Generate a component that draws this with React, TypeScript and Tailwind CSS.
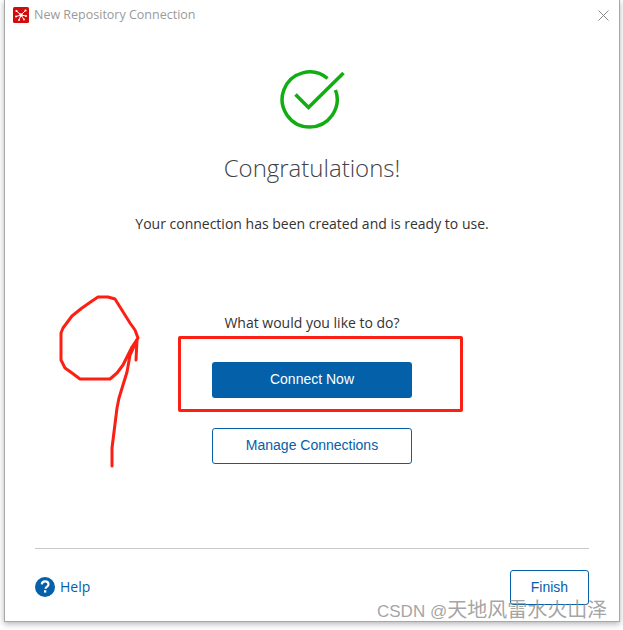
export default function App() {
  const openSans = "font-['Open_Sans',sans-serif]";
  const arial = "font-['Liberation_Sans',Arial,sans-serif]";
  return (
    <div className="relative h-[630px] w-[623px] overflow-hidden bg-white">
      <div className={`ml-[4px] flex h-[622px] w-[616px] flex-col border border-t-0 border-[#a8a8a8] bg-white shadow-[0_2px_6px_rgba(0,0,0,0.3)] ${openSans}`}>
        <div className="flex h-[30px] items-center justify-between pl-[8px] pr-[10px]">
          <div className="flex items-center gap-[5px]">
            <svg width="16" height="16" viewBox="0 0 16 16">
              <rect width="16" height="16" rx="1.5" fill="#d40b0b" />
              <path d="M8 8 3.5 4M8 8l4.5-4.5M8 8l5 1M8 8l-2 5M8 8 3 9.5M8 8l3 4.5" stroke="#fff" strokeWidth="1" />
              <circle cx="8" cy="8" r="1.8" fill="#fff" />
              <circle cx="3.5" cy="4" r="1.1" fill="#fff" />
              <circle cx="12.5" cy="3.5" r="1.1" fill="#fff" />
              <circle cx="13" cy="9" r="1" fill="#fff" />
              <circle cx="6" cy="13" r="1" fill="#fff" />
              <circle cx="3" cy="9.5" r="0.9" fill="#fff" />
              <circle cx="11" cy="12.5" r="0.9" fill="#fff" />
            </svg>
            <span className="text-[12.5px] leading-none text-[#9a9a9a]">New Repository Connection</span>
          </div>
          <svg width="11" height="11" viewBox="0 0 11 11">
            <path d="M.5.5l10 10M10.5.5l-10 10" stroke="#8a8a8a" strokeWidth="1" fill="none" />
          </svg>
        </div>

        <div className="flex flex-1 flex-col items-center">
          <svg className="ml-[4px] mt-[37px]" width="70" height="62" viewBox="0 0 70 62">
            <path
              d="M48.5 11.5A27.5 27.5 0 1 0 56.5 23"
              fill="none"
              stroke="#12ad12"
              strokeWidth="3.5"
            />
            <path d="M16.5 27.5 29.5 40.5 64.5 6" fill="none" stroke="#12ad12" strokeWidth="3.5" />
          </svg>
          <h1 className="mt-[23px] text-[24px] font-light leading-[32px] text-[#3f444a]">Congratulations!</h1>
          <p className="mt-[30px] text-[14px] leading-[20px] text-[#333]">Your connection has been created and is ready to use.</p>
          <p className="mt-[79px] text-[14px] leading-[20px] text-[#333]">What would you like to do?</p>
          <button className={`mt-[29px] h-[36px] w-[200px] rounded-[3px] bg-[#0460a9] pb-[2px] text-[14px] text-white ${arial}`}>Connect Now</button>
          <button className={`mt-[30px] h-[36px] w-[200px] rounded-[3px] border border-[#0460a9] bg-white pb-[2px] text-[14px] text-[#0460a9] ${arial}`}>Manage Connections</button>
        </div>

        <div className="mx-[30px] mb-[16px] border-t border-[#c8c8c8] pt-[21px]">
          <div className="flex items-center justify-between">
            <div className="mb-[2px] flex items-center gap-[5px]">
              <svg width="20" height="20" viewBox="0 0 20 20">
                <circle cx="10" cy="10" r="10" fill="#0460a9" />
                <path d="M6.8 7.4C6.9 5.5 8.3 4.4 10.2 4.4c2 0 3.3 1.1 3.3 2.8 0 1.3-.7 2-1.7 2.7-.9.6-1.2 1-1.2 1.9" fill="none" stroke="#fff" strokeWidth="2.2" />
                <rect x="9" y="13.2" width="2.3" height="2.4" fill="#fff" />
              </svg>
              <span className="text-[14px] leading-none text-[#0460a9]">Help</span>
            </div>
            <button className={`h-[35px] w-[79px] rounded-[3px] border border-[#0460a9] bg-white text-[14px] text-[#0460a9] ${arial}`}>Finish</button>
          </div>
        </div>
      </div>

      <div className="pointer-events-none absolute left-[178px] top-[336px] h-[76px] w-[285px] rounded-[2px] border-[3px] border-[#fb1f14]" />

      <svg className="pointer-events-none absolute left-0 top-0" width="623" height="630" viewBox="0 0 623 630">
        <path
          d="M138 338 135 330 130 323 125 315 120 307 115 299 108 297 98 297 92 301 82 308 72 316 63 328 61 333 61 360 65 368 72 373 80 379 110 379 117 373 123 365 132 347 138 338"
          fill="none"
          stroke="#fb1f14"
          strokeWidth="3"
          strokeLinejoin="round"
          strokeLinecap="round"
        />
        <path
          d="M112 466 112 448 117 408 119 398 127 372 130 355 137 340 136 360"
          fill="none"
          stroke="#fb1f14"
          strokeWidth="3"
          strokeLinejoin="round"
          strokeLinecap="round"
        />
      </svg>

      <span className="absolute left-[377px] top-[598px] whitespace-nowrap font-['Liberation_Sans','Noto_Sans_CJK_SC',sans-serif] text-[17px] leading-[24px] text-[#8c8c8c]/80">CSDN @<span className="text-[20px]">天地风雷水火山泽</span></span>
    </div>
  );
}
